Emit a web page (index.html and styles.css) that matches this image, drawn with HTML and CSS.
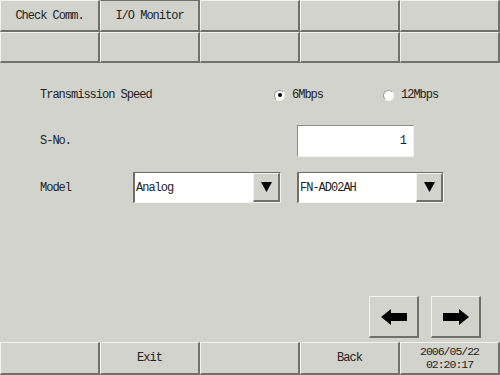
FILE: index.html
```html
<!DOCTYPE html>
<html lang="en">

<head>
    <meta charset="UTF-8">
    <meta name="viewport" content="width=device-width, initial-scale=1.0">
    <title>I/O Monitor</title>
    <link rel="stylesheet" href="styles.css">
</head>

<body>
    <div class="screen">
        <div class="tabs">
            <div class="cell">Check Comm.</div>
            <div class="cell active">I/O Monitor</div>
            <div class="cell"></div>
            <div class="cell"></div>
            <div class="cell"></div>
            <div class="cell"></div>
            <div class="cell"></div>
            <div class="cell"></div>
            <div class="cell"></div>
            <div class="cell"></div>
        </div>

        <div class="content">
            <div class="row speed-row">
                <span class="label speed-label">Transmission Speed</span>
                <span class="radio checked"><i></i>6Mbps</span>
                <span class="radio"><i></i>12Mbps</span>
            </div>

            <div class="row sno-row">
                <span class="label sno-label">S-No.</span>
                <div class="field">1</div>
            </div>

            <div class="row model-row">
                <span class="label model-label">Model</span>
                <div class="select type-select">
                    <span class="value">Analog</span>
                    <span class="drop"><svg width="11" height="10" viewBox="0 0 11 10"><polygon points="0,0 11,0 5.5,10" fill="#000"/></svg></span>
                </div>
                <div class="select unit-select">
                    <span class="value">FN-AD02AH</span>
                    <span class="drop"><svg width="11" height="10" viewBox="0 0 11 10"><polygon points="0,0 11,0 5.5,10" fill="#000"/></svg></span>
                </div>
            </div>

            <div class="pager">
                <button class="page-btn">
                    <svg width="26" height="16" viewBox="0 0 26 16"><polygon points="0,8 10,0 10,4 26,4 26,12 10,12 10,16" fill="#000"/></svg>
                </button>
                <button class="page-btn">
                    <svg width="26" height="16" viewBox="0 0 26 16"><polygon points="26,8 16,0 16,4 0,4 0,12 16,12 16,16" fill="#000"/></svg>
                </button>
            </div>
        </div>

        <div class="footer">
            <div class="cell"></div>
            <div class="cell">Exit</div>
            <div class="cell"></div>
            <div class="cell">Back</div>
            <div class="cell clock">
                <span>2006/05/22</span>
                <span>02:20:17</span>
            </div>
        </div>
    </div>
</body>

</html>
```

FILE: styles.css
```css
* {
    box-sizing: border-box;
}

body {
    margin: 0;
    background-color: #d3d3cd;
    color: #222;
    font-family: "Liberation Mono", "DejaVu Sans Mono", monospace;
    font-size: 12px;
    letter-spacing: -1px;
}

.screen {
    width: 500px;
    height: 375px;
    display: flex;
    flex-direction: column;
}

.tabs {
    display: grid;
    grid-template-columns: repeat(5, 100px);
    grid-template-rows: 32px 31px;
}

.cell {
    display: flex;
    align-items: center;
    justify-content: center;
    border-top: 1px solid #f2f2ee;
    border-left: 1px solid #f2f2ee;
    border-right: 2px solid #70706c;
    border-bottom: 2px solid #70706c;
    background-color: #d3d3cd;
}

.tabs .cell {
    padding-top: 1px;
}

.cell.active {
    border-top-color: #70706c;
}

.content {
    height: 279px;
    display: flex;
    flex-direction: column;
    padding: 0 19px 4px 40px;
}

.row {
    display: flex;
    align-items: center;
}

.row > * {
    flex-shrink: 0;
}

.speed-row {
    height: 20px;
    margin-top: 22px;
}

.speed-label {
    width: 234px;
}

.radio {
    display: flex;
    align-items: center;
    gap: 7px;
}

.radio.checked {
    width: 109px;
}

.radio i {
    position: relative;
    width: 11px;
    height: 11px;
    border-radius: 50%;
    background-color: #fff;
    border: 1px solid;
    border-color: #9a9a96 #f6f6f2 #f6f6f2 #9a9a96;
}

.radio.checked i::after {
    content: "";
    position: absolute;
    left: 2.5px;
    top: 2.5px;
    width: 4px;
    height: 4px;
    border-radius: 50%;
    background-color: #000;
}

.sno-row {
    margin-top: 20px;
}

.sno-label {
    width: 257px;
}

.field {
    width: 117px;
    height: 32px;
    display: flex;
    align-items: center;
    justify-content: flex-end;
    padding-right: 7px;
    background-color: #fff;
    border: 1px solid;
    border-color: #8a8a86 #f2f2ee #f2f2ee #8a8a86;
}

.model-row {
    margin-top: 15px;
}

.model-label {
    width: 93px;
}

.select {
    height: 31px;
    display: flex;
    background-color: #fff;
    border: 1px solid;
    border-color: #6e6e6a #f2f2ee #f2f2ee #6e6e6a;
    border-left-width: 2px;
}

.type-select {
    width: 148px;
    margin-right: 16px;
}

.unit-select {
    width: 147px;
}

.select .value {
    flex: 1;
    display: flex;
    align-items: center;
    padding-left: 1px;
}

.select .drop {
    width: 27px;
    display: flex;
    align-items: center;
    justify-content: center;
    background-color: #d3d3cd;
    border-top: 1px solid #f2f2ee;
    border-left: 1px solid #f2f2ee;
    border-right: 2px solid #70706c;
    border-bottom: 2px solid #70706c;
}

.pager {
    margin-top: auto;
    display: flex;
    justify-content: flex-end;
    gap: 12px;
}

.page-btn {
    width: 50px;
    height: 42px;
    padding: 0;
    display: flex;
    align-items: center;
    justify-content: center;
    background-color: #d3d3cd;
    border-top: 1px solid #f2f2ee;
    border-left: 1px solid #f2f2ee;
    border-right: 2px solid #70706c;
    border-bottom: 2px solid #70706c;
}

.footer {
    display: grid;
    grid-template-columns: repeat(5, 100px);
    height: 33px;
}

.clock {
    flex-direction: column;
    font-size: 11.5px;
    line-height: 13px;
}
```
